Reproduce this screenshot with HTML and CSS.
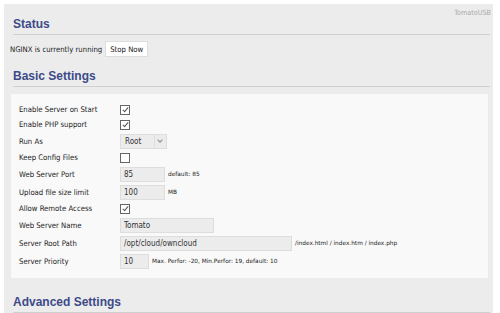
FILE: index.html
```html
<!DOCTYPE html>
<html lang="en">
<head>
    <meta charset="UTF-8">
    <title>NGINX Web Server</title>
    <link rel="stylesheet" href="styles.css">
</head>
<body>
    <div class="panel">
        <div class="brand">TomatoUSB</div>

        <!-- Status -->
        <h2 class="section-title">Status</h2>
        <div class="status-line">
            <span>NGINX is currently running</span>
            <button class="btn">Stop Now</button>
        </div>

        <!-- Basic Settings -->
        <h2 class="section-title">Basic Settings</h2>
        <div class="settings">
            <div class="row">
                <label>Enable Server on Start</label>
                <span class="check on"></span>
            </div>
            <div class="row">
                <label>Enable PHP support</label>
                <span class="check on"></span>
            </div>
            <div class="row">
                <label>Run As</label>
                <span class="select">Root<span class="arrow"></span></span>
            </div>
            <div class="row">
                <label>Keep Config Files</label>
                <span class="check"></span>
            </div>
            <div class="row">
                <label>Web Server Port</label>
                <span class="field w45">85</span>
                <span class="hint">default: 85</span>
            </div>
            <div class="row">
                <label>Upload file size limit</label>
                <span class="field w45">100</span>
                <span class="hint">MB</span>
            </div>
            <div class="row">
                <label>Allow Remote Access</label>
                <span class="check on"></span>
            </div>
            <div class="row">
                <label>Web Server Name</label>
                <span class="field w95">Tomato</span>
            </div>
            <div class="row">
                <label>Server Root Path</label>
                <span class="field w173">/opt/cloud/owncloud</span>
                <span class="hint">/index.html / index.htm / index.php</span>
            </div>
            <div class="row">
                <label>Server Priority</label>
                <span class="field w30">10</span>
                <span class="hint">Max. Perfor: -20, Min.Perfor: 19, default: 10</span>
            </div>
        </div>

        <!-- Advanced Settings -->
        <h2 class="section-title advanced">Advanced Settings</h2>
    </div>
</body>
</html>
```

FILE: styles.css
```css
body {
    margin: 0;
    padding: 4px 7px 0 4px;
    background-color: white;
    font-family: "DejaVu Sans Condensed", "DejaVu Sans", sans-serif;
    font-size: 7.7px;
    color: #222;
}

.panel {
    position: relative;
    background-color: #ececec;
    padding: 1px 3px 0 7px;
    height: 320px;
}

.brand {
    position: absolute;
    top: 4px;
    right: 2px;
    color: #aaa;
    font-size: 7.2px;
}

.section-title {
    margin: 12px 0 0 2px;
    padding-bottom: 3px;
    border-bottom: 1px solid #d0d0d0;
    font-family: "Liberation Sans", Arial, sans-serif;
    font-size: 12px;
    font-weight: bold;
    color: #3c4a88;
}

.section-title.advanced {
    margin-top: 17.5px;
}

.status-line {
    display: flex;
    align-items: center;
    gap: 3px;
    margin: 6px 0 0 -1px;
}

.btn {
    font-family: inherit;
    font-size: 7.7px;
    color: #222;
    background: white;
    border: 1px solid #ddd;
    height: 16px;
    padding: 0 4px;
}

.settings {
    background-color: #f9f9f9;
    margin: 7px 2px 0 0;
    padding: 9.5px 0 9px 8px;
}

.row {
    display: flex;
    align-items: center;
    min-height: 12px;
    margin-bottom: 3px;
}

.row:last-child {
    margin-bottom: 0;
}

.row label {
    width: 101px;
}

.check {
    width: 8px;
    height: 8px;
    border: 1px solid #666;
    background: white;
    position: relative;
}

.check.on::after {
    content: "";
    position: absolute;
    left: 3px;
    top: 0;
    width: 2px;
    height: 5px;
    border-right: 1px solid #555;
    border-bottom: 1px solid #555;
    transform: rotate(40deg);
}

.field, .select {
    box-sizing: border-box;
    height: 15px;
    line-height: 13px;
    background: #ececec;
    border: 1px solid #ddd;
    padding: 0 3px;
    font-size: 8px;
    color: #333;
}

.select {
    display: flex;
    width: 47px;
    padding-left: 4px;
    padding-right: 0;
}

.arrow {
    margin-left: auto;
    width: 11px;
    border-left: 1px solid #ddd;
    position: relative;
}

.arrow::after {
    content: "";
    position: absolute;
    left: 3px;
    top: 3px;
    width: 3px;
    height: 3px;
    border-right: 1px solid #888;
    border-bottom: 1px solid #888;
    transform: rotate(45deg);
}

.w30 { width: 29px; }
.w45 { width: 45px; }
.w95 { width: 94px; }
.w173 { width: 172px; }

.hint {
    margin-left: 3px;
    font-family: "DejaVu Sans", sans-serif;
    font-size: 5.8px;
    color: #222;
}
```
